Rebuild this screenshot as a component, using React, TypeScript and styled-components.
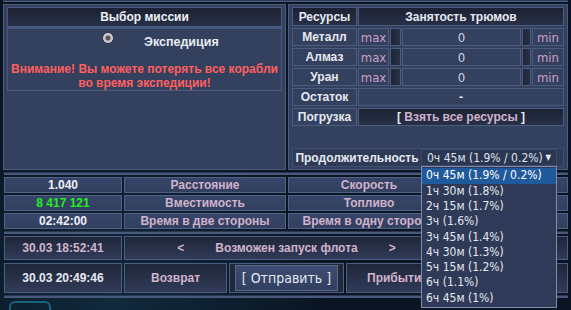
import React from "react";
import styled, { createGlobalStyle, css } from "styled-components";

const GlobalStyle = createGlobalStyle`
  html, body { margin: 0; padding: 0; }
  body {
    width: 571px;
    height: 310px;
    overflow: hidden;
    background: #0a1422;
    font-family: "Liberation Sans", Arial, sans-serif;
    font-size: 12px;
  }
`;

const pink = "#d0b3cc";
const edge = "#4b5c80";
const panelBg = "#33405e";
const condensed = css`
  font-family: "DejaVu Sans Condensed", "DejaVu Sans", sans-serif;
  font-stretch: condensed;
`;

const Page = styled.div`
  display: flex;
  flex-direction: column;
  padding: 0 3px;
  width: 565px;
  height: 310px;
  background: radial-gradient(circle at 20% 100%, #102a3c 0%, #0a1422 40%);
`;

const TopEdge = styled.div`
  height: 2px;
  background: #2f3c58;
  border-bottom: 1px solid ${edge};
  margin-bottom: 2px;
`;

const MainRow = styled.div`
  display: flex;
  gap: 2px;
  height: 166px;
`;

const Panel = styled.div<{ $w?: number }>`
  box-sizing: border-box;
  ${(p) => (p.$w ? css`width: ${p.$w}px;` : css`flex: 1;`)}
  border: 1px solid ${edge};
  background: ${panelBg};
  padding: 2px 3px;
  display: flex;
  flex-direction: column;
`;

const MissionBox = styled.div`
  border: 1px solid ${edge};
  display: flex;
  flex-direction: column;
`;

const PanelHeader = styled.div`
  height: 18px;
  line-height: 18px;
  text-align: center;
  font-weight: bold;
  color: #eef0f6;
  background: linear-gradient(#1c2233, #283047);
`;

const HeaderRule = styled.div`
  height: 3px;
  background: #46587e;
`;

const MissionBody = styled.div`
  height: 61px;
  display: flex;
  flex-direction: column;
  align-items: center;
`;

const MissionOption = styled.div`
  align-self: stretch;
  display: flex;
  align-items: center;
  gap: 31px;
  padding: 3px 0 0 95px;
  height: 16px;
`;

const Radio = styled.span`
  width: 10px;
  height: 10px;
  border-radius: 50%;
  margin-top: -4px;
  background: radial-gradient(circle, #555 0 2px, #9a9a9a 2.5px, #d8d8d8 4px);
  box-shadow: 0 0 1px #000;
`;

const OptionLabel = styled.span`
  font-size: 12.5px;
  font-weight: bold;
  color: #e8ebf2;
  padding-top: 4px;
`;

const Warning = styled.div`
  margin-top: 14px;
  text-align: center;
  font-weight: bold;
  font-size: 12px;
  line-height: 14px;
  color: #ff5f5f;
`;

const ResGrid = styled.div`
  display: grid;
  grid-template-columns: 65px 31px 11px 119px 9px 32px;
  grid-template-rows: 19px repeat(5, 18px);
  column-gap: 1px;
  row-gap: 2px;
`;

type Tone = "plain" | "dark" | "well";

const Cell = styled.div<{ $tone?: Tone; $span?: number; $color?: string; $bold?: boolean; $mono?: boolean }>`
  box-sizing: border-box;
  border: 1px solid ${edge};
  display: flex;
  align-items: center;
  justify-content: center;
  white-space: nowrap;
  overflow: hidden;
  color: ${(p) => p.$color || "#e6e9f1"};
  font-weight: ${(p) => (p.$bold === false ? "normal" : "bold")};
  ${(p) => p.$mono && css`${condensed} font-size: 13px;`}
  ${(p) => p.$span && css`grid-column: span ${p.$span};`}
  background: ${(p) =>
    p.$tone === "dark"
      ? "linear-gradient(#1c2233, #283047)"
      : p.$tone === "well"
      ? "linear-gradient(90deg, #1e2536, #2a3248)"
      : panelBg};
`;

const DurationRow = styled.div`
  margin-top: 22px;
  height: 19px;
  box-sizing: border-box;
  border: 1px solid #3f4f72;
  background: #2e3a56;
  display: flex;
  align-items: center;
  padding-right: 6px;
`;

const DurationLabel = styled.div`
  width: 128px;
  text-align: center;
  font-weight: bold;
  color: #e6e9f1;
`;

const SelectWrap = styled.div`
  position: relative;
  flex: 1;
  height: 17px;
`;

const SelectBox = styled.div`
  box-sizing: border-box;
  height: 17px;
  padding: 0 5px 0 5px;
  display: flex;
  align-items: center;
  justify-content: space-between;
  white-space: nowrap;
  background: #2b3651;
  border: 1px solid #3c4b6d;
  ${condensed}
  font-size: 12px;
  color: #dfe4ee;
`;

const Arrow = styled.span`
  font-size: 8px;
  color: #e6e9f1;
`;

const OptionList = styled.ul`
  position: absolute;
  top: 17px;
  left: 0;
  right: 0;
  margin: 0;
  padding: 1px 0;
  list-style: none;
  background: #2e3a57;
  border: 1px solid #7d8cab;
  z-index: 5;
  ${condensed}
  font-size: 12px;
`;

const OptionItem = styled.li<{ $active?: boolean }>`
  height: 15.3px;
  line-height: 15px;
  padding-left: 4px;
  white-space: nowrap;
  color: ${(p) => (p.$active ? "#ffffff" : "#e4e8f0")};
  background: ${(p) => (p.$active ? "#1f5b9c" : "transparent")};
`;

const Divider = styled.div<{ $top: number; $bottom: number }>`
  margin: ${(p) => p.$top}px 0 ${(p) => p.$bottom}px 1px;
  height: 3px;
  background: #48597c;
  border-top: 1px solid #2a3550;
`;

const InfoGrid = styled.div`
  display: grid;
  grid-template-columns: 118px 162px 162px 116px;
  grid-auto-rows: 16px;
  gap: 2px;
  margin-left: 1px;
`;

const InfoCell = styled(Cell)`
  border-color: #506286;
  background: linear-gradient(#37456a, #323f5d);
`;

const LaunchGrid = styled.div`
  display: grid;
  grid-template-columns: 118px 103px 115px 103px 1fr;
  grid-template-rows: 24px 30px;
  gap: 3px 2px;
  margin-left: 1px;
`;

const LaunchCell = styled(Cell)`
  border-color: #4d5e83;
  background: linear-gradient(#1f2638, #313b58);
`;

const Message = styled.div`
  display: flex;
  gap: 31px;
  color: ${pink};
  font-size: 12px;
  font-weight: bold;
`;

const ButtonCell = styled(LaunchCell)`
  background: #20283a;
  padding: 0 4px;
`;

const SendButton = styled.button`
  width: 103px;
  height: 26px;
  border: 1px solid #56688e;
  background: linear-gradient(#3d4c71, #313f60);
  color: #e3e8f2;
  ${condensed}
  font-size: 14px;
  padding: 0;
`;

const Teal = styled.div`
  margin: 3px 0 0 6px;
  width: 38px;
  height: 10px;
  border: 2px solid #17657c;
  border-bottom: none;
  border-radius: 6px 6px 0 0;
`;

const durations = [
  "0ч 45м (1.9% / 0.2%)",
  "1ч 30м (1.8%)",
  "2ч 15м (1.7%)",
  "3ч (1.6%)",
  "3ч 45м (1.4%)",
  "4ч 30м (1.3%)",
  "5ч 15м (1.2%)",
  "6ч (1.1%)",
  "6ч 45м (1%)",
];

const resources = ["Металл", "Алмаз", "Уран"];

const info = [
  { value: "1.040", label: "Расстояние", label2: "Скорость", value2: "7 500" },
  { value: "8 417 121", green: true, label: "Вместимость", label2: "Топливо", value2: "1 263" },
  { value: "02:42:00", label: "Время в две стороны", label2: "Время в одну сторону", value2: "01:21:00" },
];

export default function App() {
  return (
    <>
      <GlobalStyle />
      <Page>
        <TopEdge />
        <MainRow>
          <Panel $w={283}>
            <MissionBox>
              <PanelHeader>Выбор миссии</PanelHeader>
              <HeaderRule />
              <MissionBody>
                <MissionOption>
                  <Radio />
                  <OptionLabel>Экспедиция</OptionLabel>
                </MissionOption>
                <Warning>
                  Внимание! Вы можете потерять все корабли
                  <br />
                  во время экспедиции!
                </Warning>
              </MissionBody>
            </MissionBox>
          </Panel>

          <Panel>
            <ResGrid>
              <Cell $tone="dark">Ресурсы</Cell>
              <Cell $tone="dark" $span={5}>Занятость трюмов</Cell>
              {resources.map((r) => (
                <React.Fragment key={r}>
                  <Cell>{r}</Cell>
                  <Cell $color="#c9a2c1" $bold={false} $mono>max</Cell>
                  <Cell $tone="well" />
                  <Cell $bold={false} $mono $color="#cfd6e4">0</Cell>
                  <Cell $tone="well" />
                  <Cell $color="#c9a2c1" $bold={false} $mono>min</Cell>
                </React.Fragment>
              ))}
              <Cell>Остаток</Cell>
              <Cell $span={5}>-</Cell>
              <Cell>Погрузка</Cell>
              <Cell $tone="dark" $span={5} $color={pink}>
                <span style={{ color: "#e6e9f1" }}>[</span>&nbsp;Взять все ресурсы&nbsp;
                <span style={{ color: "#e6e9f1" }}>]</span>
              </Cell>
            </ResGrid>
            <DurationRow>
              <DurationLabel>Продолжительность</DurationLabel>
              <SelectWrap>
                <SelectBox>
                  {durations[0]}
                  <Arrow>▼</Arrow>
                </SelectBox>
                <OptionList>
                  {durations.map((d, i) => (
                    <OptionItem key={d} $active={i === 0}>
                      {d}
                    </OptionItem>
                  ))}
                </OptionList>
              </SelectWrap>
            </DurationRow>
          </Panel>
        </MainRow>

        <Divider $top={2} $bottom={2} />
        <InfoGrid>
          {info.map((row) => (
            <React.Fragment key={row.label}>
              <InfoCell $color={row.green ? "#22ee22" : "#eef0f6"}>{row.value}</InfoCell>
              <InfoCell $color={pink}>{row.label}</InfoCell>
              <InfoCell $color={pink}>{row.label2}</InfoCell>
              <InfoCell>{row.value2}</InfoCell>
            </React.Fragment>
          ))}
        </InfoGrid>

        <Divider $top={2} $bottom={2} />
        <LaunchGrid>
          <LaunchCell $color={pink}>30.03 18:52:41</LaunchCell>
          <LaunchCell $span={3}>
            <Message>
              <span>&lt;</span>
              <span>Возможен запуск флота</span>
              <span>&gt;</span>
            </Message>
          </LaunchCell>
          <LaunchCell $color={pink}>30.03 18:52:41</LaunchCell>
          <LaunchCell>30.03 20:49:46</LaunchCell>
          <LaunchCell $color={pink}>Возврат</LaunchCell>
          <ButtonCell>
            <SendButton>[ Отправить ]</SendButton>
          </ButtonCell>
          <LaunchCell $color={pink}>Прибытие</LaunchCell>
          <LaunchCell>30.03 19:37:41</LaunchCell>
        </LaunchGrid>
        <Divider $top={2} $bottom={0} />
        <Teal />
      </Page>
    </>
  );
}
